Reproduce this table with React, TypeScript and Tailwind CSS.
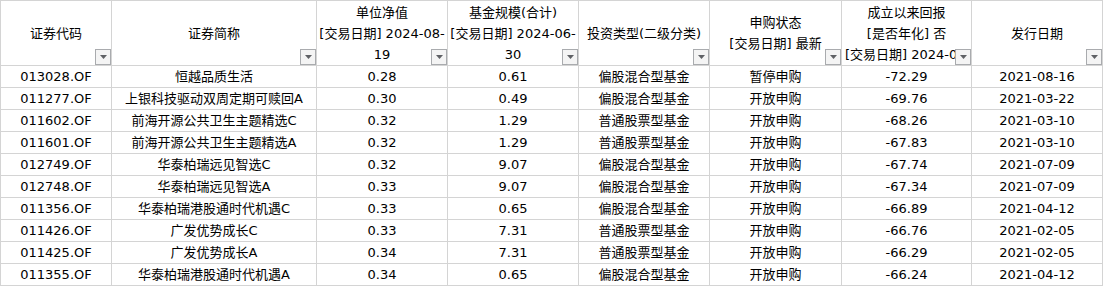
const COLS = "grid-cols-[111px_205px_131px_131px_131px_132px_130px_131px]";

type Row = [string, string, string, string, string, string, string, string];

const rows: Row[] = [
  ["013028.OF", "恒越品质生活", "0.28", "0.61", "偏股混合型基金", "暂停申购", "-72.29", "2021-08-16"],
  ["011277.OF", "上银科技驱动双周定期可赎回A", "0.30", "0.49", "偏股混合型基金", "开放申购", "-69.76", "2021-03-22"],
  ["011602.OF", "前海开源公共卫生主题精选C", "0.32", "1.29", "普通股票型基金", "开放申购", "-68.26", "2021-03-10"],
  ["011601.OF", "前海开源公共卫生主题精选A", "0.32", "1.29", "普通股票型基金", "开放申购", "-67.83", "2021-03-10"],
  ["012749.OF", "华泰柏瑞远见智选C", "0.32", "9.07", "偏股混合型基金", "开放申购", "-67.74", "2021-07-09"],
  ["012748.OF", "华泰柏瑞远见智选A", "0.33", "9.07", "偏股混合型基金", "开放申购", "-67.34", "2021-07-09"],
  ["011356.OF", "华泰柏瑞港股通时代机遇C", "0.33", "0.65", "偏股混合型基金", "开放申购", "-66.89", "2021-04-12"],
  ["011426.OF", "广发优势成长C", "0.33", "7.31", "普通股票型基金", "开放申购", "-66.76", "2021-02-05"],
  ["011425.OF", "广发优势成长A", "0.34", "7.31", "普通股票型基金", "开放申购", "-66.29", "2021-02-05"],
  ["011355.OF", "华泰柏瑞港股通时代机遇A", "0.34", "0.65", "偏股混合型基金", "开放申购", "-66.24", "2021-04-12"],
];

const headers: string[][] = [
  ["证券代码"],
  ["证券简称"],
  ["单位净值", "[交易日期] 2024-08-", "19"],
  ["基金规模(合计)", "[交易日期] 2024-06-", "30"],
  ["投资类型(二级分类)"],
  ["申购状态", "[交易日期] 最新"],
  ["成立以来回报", "[是否年化] 否"],
  ["发行日期"],
];

function FilterButton() {
  return (
    <span className="absolute right-0 bottom-0 flex h-4 w-4 items-center justify-center border border-[#a9abae] bg-[#f4f4f4]">
      <svg width="7" height="4" viewBox="0 0 7 4">
        <path d="M0 0h7L3.5 4z" fill="#5f6165" />
      </svg>
    </span>
  );
}

export default function App() {
  return (
    <div
      className="w-[1103px] h-[286px] overflow-hidden bg-white text-black text-[13px]"
      style={{ fontFamily: '"DejaVu Sans", "Noto Sans CJK SC", sans-serif' }}
    >
      <div className={`grid ${COLS} border-t border-l border-[#d4d4d4]`}>
        {headers.map((lines, i) => (
          <div
            key={i}
            className="relative h-[65px] overflow-hidden border-r border-b border-[#d4d4d4] flex flex-col items-center justify-center leading-[21px] whitespace-nowrap"
          >
            {lines.map((l) => (
              <div key={l}>{l}</div>
            ))}
            {i === 6 && <div className="self-start pl-[3px]">[交易日期] 2024-0</div>}
            <FilterButton />
          </div>
        ))}
        {rows.map((r) =>
          r.map((cell, j) => (
            <div
              key={r[0] + j}
              className="h-[22px] overflow-hidden border-r border-b border-[#d4d4d4] flex items-center justify-center whitespace-nowrap"
            >
              {cell}
            </div>
          ))
        )}
      </div>
    </div>
  );
}
